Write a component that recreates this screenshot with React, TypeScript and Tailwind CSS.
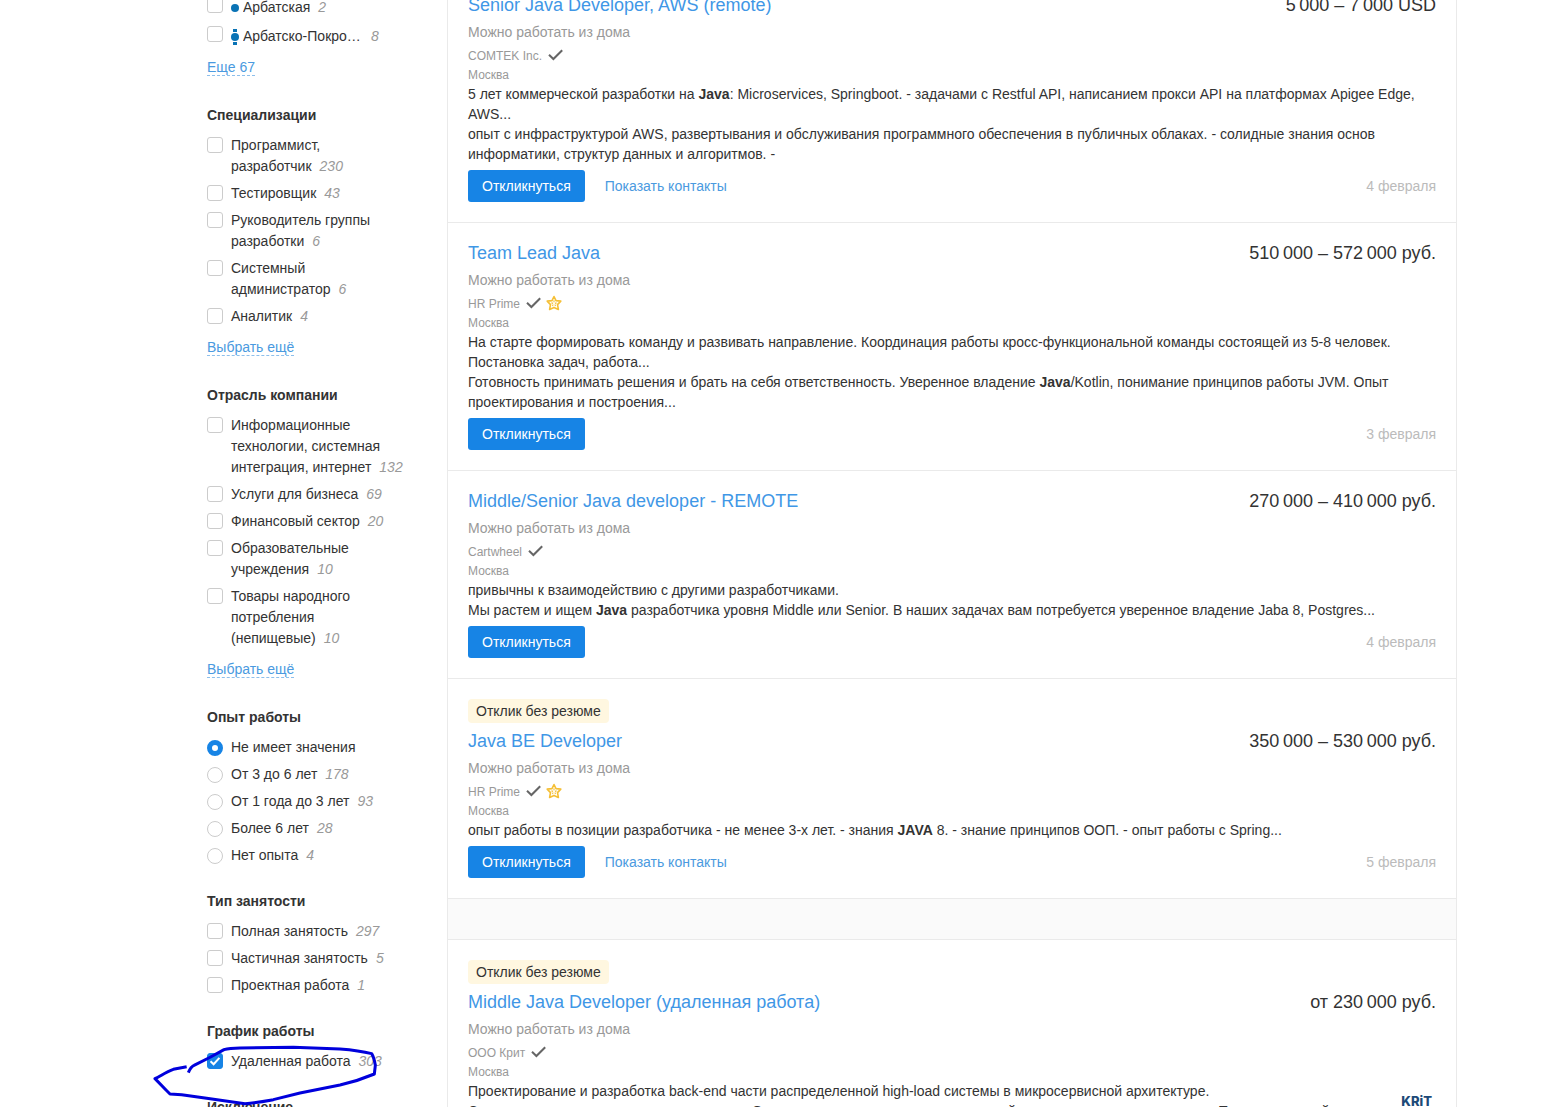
import { Fragment, ReactNode } from "react";

type FilterItem = {
  label: string;
  count?: number;
  checked?: boolean;
  metro?: "station" | "line";
  marked?: boolean;
};

type FilterGroup = {
  title?: string;
  name: string;
  type: "checkbox" | "radio";
  items: FilterItem[];
  more?: string;
};

type Vacancy = {
  title: string;
  salary: string;
  company: string;
  premium?: boolean;
  quick?: boolean;
  contacts?: boolean;
  date: string;
  description: ReactNode[];
  logo?: ReactNode;
};

const filters: FilterGroup[] = [
  {
    name: "metro",
    type: "checkbox",
    items: [
      { label: "Арбатская", count: 2, metro: "station" },
      { label: "Арбатско-Покровская", count: 8, metro: "line" },
    ],
    more: "Еще 67",
  },
  {
    title: "Специализации",
    name: "specialization",
    type: "checkbox",
    items: [
      { label: "Программист, разработчик", count: 230 },
      { label: "Тестировщик", count: 43 },
      { label: "Руководитель группы разработки", count: 6 },
      { label: "Системный администратор", count: 6 },
      { label: "Аналитик", count: 4 },
    ],
    more: "Выбрать ещё",
  },
  {
    title: "Отрасль компании",
    name: "industry",
    type: "checkbox",
    items: [
      {
        label: "Информационные технологии, системная интеграция, интернет",
        count: 132,
      },
      { label: "Услуги для бизнеса", count: 69 },
      { label: "Финансовый сектор", count: 20 },
      { label: "Образовательные учреждения", count: 10 },
      { label: "Товары народного потребления (непищевые)", count: 10 },
    ],
    more: "Выбрать ещё",
  },
  {
    title: "Опыт работы",
    name: "experience",
    type: "radio",
    items: [
      { label: "Не имеет значения", checked: true },
      { label: "От 3 до 6 лет", count: 178 },
      { label: "От 1 года до 3 лет", count: 93 },
      { label: "Более 6 лет", count: 28 },
      { label: "Нет опыта", count: 4 },
    ],
  },
  {
    title: "Тип занятости",
    name: "employment",
    type: "checkbox",
    items: [
      { label: "Полная занятость", count: 297 },
      { label: "Частичная занятость", count: 5 },
      { label: "Проектная работа", count: 1 },
    ],
  },
  {
    title: "График работы",
    name: "schedule",
    type: "checkbox",
    items: [
      { label: "Удаленная работа", count: 303, checked: true, marked: true },
    ],
  },
  { title: "Исключение", name: "exclude", type: "checkbox", items: [] },
];

const vacancies: Vacancy[] = [
  {
    title: "Senior Java Developer, AWS (remote)",
    salary: "5\u2009000 – 7\u2009000 USD",
    company: "COMTEK Inc.",
    contacts: true,
    date: "4 февраля",
    description: [
      <>
        5 лет коммерческой разработки на <b>Java</b>: Microservices, Springboot.
        - задачами с Restful API, написанием прокси API на платформах Apigee
        Edge, AWS...
      </>,
      "опыт с инфраструктурой AWS, развертывания и обслуживания программного обеспечения в публичных облаках. - солидные знания основ информатики, структур данных и алгоритмов. -",
    ],
  },
  {
    title: "Team Lead Java",
    salary: "510\u2009000 – 572\u2009000 руб.",
    company: "HR Prime",
    premium: true,
    date: "3 февраля",
    description: [
      "На старте формировать команду и развивать направление. Координация работы кросс-функциональной команды состоящей из 5-8 человек. Постановка задач, работа...",
      <>
        Готовность принимать решения и брать на себя ответственность. Уверенное
        владение <b>Java</b>/Kotlin, понимание принципов работы JVM. Опыт
        проектирования и построения...
      </>,
    ],
  },
  {
    title: "Middle/Senior Java developer - REMOTE",
    salary: "270\u2009000 – 410\u2009000 руб.",
    company: "Cartwheel",
    date: "4 февраля",
    description: [
      "привычны к взаимодействию с другими разработчиками.",
      <>
        Мы растем и ищем <b>Java</b> разработчика уровня Middle или Senior. В
        наших задачах вам потребуется уверенное владение Jaba 8, Postgres...
      </>,
    ],
  },
  {
    title: "Java BE Developer",
    salary: "350\u2009000 – 530\u2009000 руб.",
    company: "HR Prime",
    premium: true,
    quick: true,
    contacts: true,
    date: "5 февраля",
    description: [
      <>
        опыт работы в позиции разработчика - не менее 3-х лет. - знания{" "}
        <b>JAVA</b> 8. - знание принципов ООП. - опыт работы с Spring...
      </>,
    ],
  },
  {
    title: "Middle Java Developer (удаленная работа)",
    salary: "от 230\u2009000 руб.",
    company: "ООО Крит",
    quick: true,
    date: "5 февраля",
    description: [
      "Проектирование и разработка back-end части распределенной high-load системы в микросервисной архитектуре.",
      "Создание и модернизация микросервисов. Оптимизация и поддержка подключений, анализ логов сервиса и кода. Технологический стек...",
    ],
    logo: (
      <span className="font-[Inter,sans-serif] text-[13px] leading-5 font-extrabold text-[#1d4a78]">
        KRiT
      </span>
    ),
  },
];

const TickIcon = () => (
  <svg
    width="16"
    height="12"
    viewBox="0 0 16 12"
    className="mb-0.5 ml-1.5"
    fill="none"
  >
    <path d="M1 5.8 5.4 10 14.2 1.2" stroke="#666" strokeWidth="2" />
  </svg>
);

const StarIcon = () => (
  <svg
    width="16"
    height="16"
    viewBox="0 0 16 16"
    className="mb-0.5 ml-1"
    fill="none"
  >
    <path
      d="M8 1.5 10 5.6 14.8 6.1 11.5 9.6 12.4 14.4 8 12.4 3.6 14.4 4.5 9.6 1.2 6.1 6 5.6Z"
      stroke="#f5bf35"
      strokeWidth="1.6"
      strokeLinejoin="round"
    />
    <path
      d="M8 5.2v2M5.4 7.9l1.7.5M10.6 7.9l-1.7.5M6.4 11l.8-1.4M9.6 11l-.8-1.4"
      stroke="#f5bf35"
      strokeWidth="1.1"
    />
  </svg>
);

const MetroIcon = ({ kind }: { kind: "station" | "line" }) => (
  <svg
    width="8"
    height="18"
    viewBox="0 0 8 18"
    className="mr-1 shrink-0"
    fill="#0a73b5"
  >
    {kind === "line" && <path d="M2 1h4v3H2zM2 14h4v3H2z" />}
    <circle cx="4" cy="9" r="4" />
  </svg>
);

// hand-drawn loop around the active schedule filter
const MarkerLoop = () => (
  <svg
    className="pointer-events-none absolute -top-[51px] -left-[67px]"
    width="280"
    height="107"
    viewBox="0 0 840 321"
    fill="none"
  >
    <path
      d="M145 218C150 206 153 200 162 196L212 171 252 149C268 144 285 144 300 144L460 142 600 147C640 150 672 155 695 161C702 172 704 184 706 196L703 222C670 236 640 246 600 255L480 279 400 299C372 304 345 309 315 311L200 295 125 284 90 282 78 270 45 236C62 228 78 216 100 208L140 200"
      stroke="#0000dc"
      strokeWidth="9"
      strokeLinejoin="round"
    />
  </svg>
);

const FilterInput = ({
  type,
  name,
  checked,
}: {
  type: "checkbox" | "radio";
  name: string;
  checked?: boolean;
}) => {
  if (type === "radio") {
    return (
      <input
        type="radio"
        name={name}
        defaultChecked={checked}
        className="mt-[3px] mr-2 size-4 shrink-0 appearance-none rounded-full border border-[#ccc] bg-white checked:border-[5px] checked:border-[#1784e5]"
      />
    );
  }
  return (
    <span className="relative mt-0.5 mr-2 size-4 shrink-0">
      <input
        type="checkbox"
        name={name}
        defaultChecked={checked}
        className="peer block size-4 appearance-none rounded-[3px] border border-[#ccc] bg-white checked:border-[#1784e5] checked:bg-[#1784e5]"
      />
      <svg
        viewBox="0 0 16 16"
        fill="none"
        className="pointer-events-none absolute inset-0 hidden peer-checked:block"
      >
        <path d="M3.5 8.2 6.6 11.2 12.4 4.8" stroke="#fff" strokeWidth="2" />
      </svg>
    </span>
  );
};

const FilterRow = ({ group, item }: { group: FilterGroup; item: FilterItem }) => {
  const count = item.count !== undefined && (
    <i className="ml-2 text-[#999]">{item.count}</i>
  );
  return (
    <li className={item.metro ? "mb-1.5 h-[23px]" : "mb-1.5"}>
      <label className="relative flex">
        <FilterInput type={group.type} name={group.name} checked={item.checked} />
        {item.metro ? (
          <span className="flex items-center pt-0.5">
            <MetroIcon kind={item.metro} />
            <span className="max-w-[120px] truncate">{item.label}</span>
            {count}
          </span>
        ) : (
          <span>
            {item.label}
            {count}
          </span>
        )}
        {item.marked && <MarkerLoop />}
      </label>
    </li>
  );
};

const FilterSection = ({ group }: { group: FilterGroup }) => (
  <section className={group.more ? "mb-7" : "mb-[25px]"}>
    {group.title && (
      <h3 className="mb-2.5 leading-5 font-bold">{group.title}</h3>
    )}
    <ul className="leading-[21px]">
      {group.items.map((item) => (
        <FilterRow key={item.label} group={group} item={item} />
      ))}
    </ul>
    {group.more && (
      <div className="mt-2.5 leading-5">
        <a
          href="#"
          className="inline-block border-b border-dashed border-[#8dbfec] leading-4 text-[#4a9ae0]"
        >
          {group.more}
        </a>
      </div>
    )}
  </section>
);

const VacancyCard = ({ vacancy }: { vacancy: Vacancy }) => (
  <article className="border-b border-[#eaeaea] p-5">
    {vacancy.quick && (
      <div className="mb-2 flex">
        <span className="rounded-sm bg-[#fff7e0] px-2 leading-6">
          Отклик без резюме
        </span>
      </div>
    )}
    <div className="flex justify-between text-lg leading-5">
      <a href="#" className="text-[#3f97e6]">
        {vacancy.title}
      </a>
      <span>{vacancy.salary}</span>
    </div>
    <div className="mt-[7px] leading-5 text-[#999]">Можно работать из дома</div>
    <div className="mt-[5px] flex h-[18px] items-center text-xs text-[#999]">
      <a href="#">{vacancy.company}</a>
      <TickIcon />
      {vacancy.premium && <StarIcon />}
    </div>
    <div className="mt-0.5 text-xs leading-[17px] text-[#999]">Москва</div>
    <div className="flex justify-between leading-5">
      <div>
        {vacancy.description.map((text, i) => (
          <p key={i}>{text}</p>
        ))}
      </div>
      {vacancy.logo && <div className="mt-2.5 mr-1">{vacancy.logo}</div>}
    </div>
    <div className="mt-1.5 flex items-center">
      <button
        type="button"
        className="h-8 rounded-[3px] bg-[#1784e5] px-3.5 text-white"
      >
        Откликнуться
      </button>
      {vacancy.contacts && (
        <a href="#" className="ml-5 text-[#4a9ae0]">
          Показать контакты
        </a>
      )}
      <span className="ml-auto text-[#bbb]">{vacancy.date}</span>
    </div>
  </article>
);

export default function App() {
  return (
    <div className="h-screen overflow-hidden bg-white font-['Liberation_Sans',Arial,sans-serif] text-sm text-[#333]">
      <div className="-mt-[25px] flex pr-[111px] pl-[207px]">
        <aside className="w-60 shrink-0 pt-5 pr-9">
          {filters.map((group) => (
            <FilterSection key={group.name} group={group} />
          ))}
        </aside>
        <main className="min-w-0 flex-1 border-x border-[#eaeaea]">
          {vacancies.map((vacancy, i) => (
            <Fragment key={vacancy.title}>
              {i === 4 && (
                <div className="h-[41px] border-b border-[#eaeaea] bg-[#fafafa]" />
              )}
              <VacancyCard vacancy={vacancy} />
            </Fragment>
          ))}
        </main>
      </div>
    </div>
  );
}
